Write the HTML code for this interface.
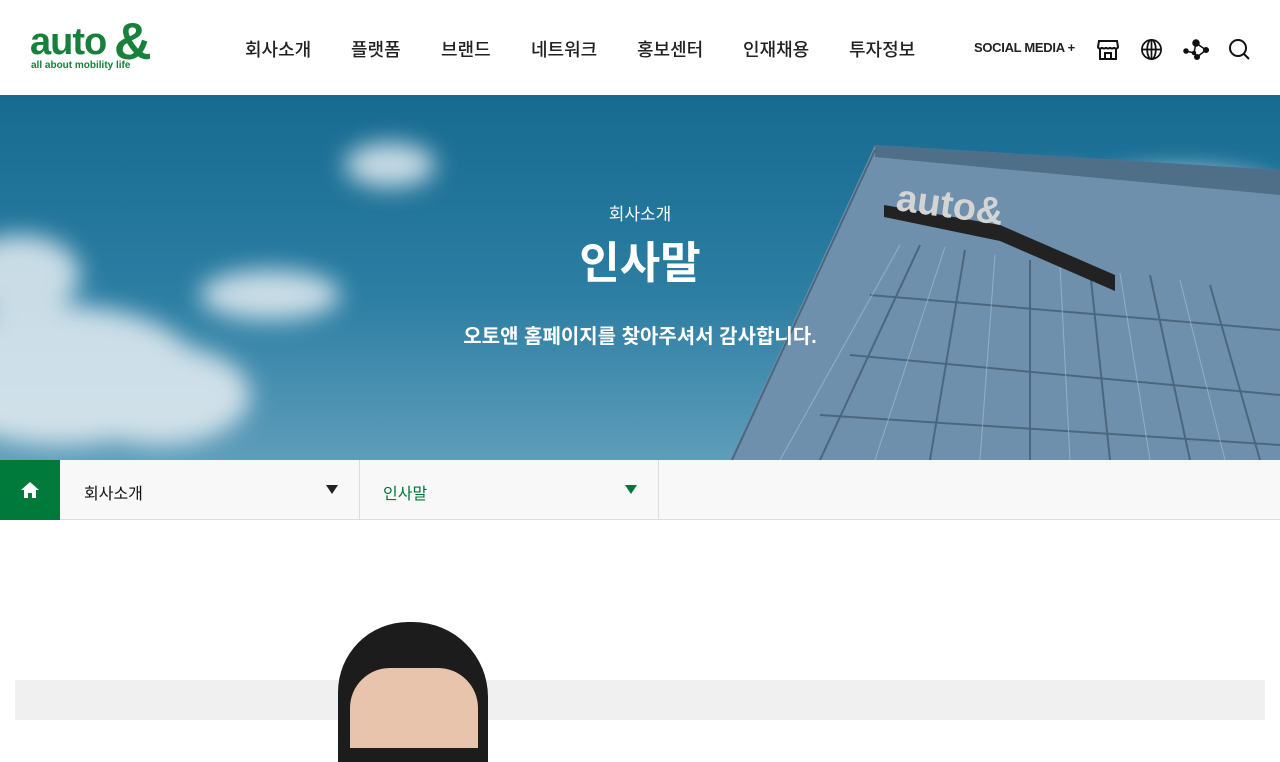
<!DOCTYPE html>
<html><head><meta charset="utf-8"><style>
*{margin:0;padding:0;box-sizing:border-box}
body{width:1280px;height:720px;overflow:hidden;background:#fff;font-family:"Liberation Sans","Noto Sans CJK KR",sans-serif;position:relative}
.hdr{position:absolute;left:0;top:0;width:1280px;height:95px;background:#fff}
.nav{position:absolute;top:36px;font-size:18px;color:#222;font-weight:500}
.sm{position:absolute;left:974px;top:40px;font-size:13px;font-weight:bold;color:#222;letter-spacing:-0.3px}
.hero{position:absolute;left:0;top:95px;width:1280px;height:365px;overflow:hidden;background:linear-gradient(180deg,#176a90 0%,#2c7ea3 55%,#5f9dba 100%)}
.bc{position:absolute;top:460px;left:0;width:1280px;height:60px;background:#f8f8f8;border-bottom:1px solid #ddd}
</style></head><body>
<div class="hdr">
<div style="position:absolute;left:30px;top:22px;font-size:38px;font-weight:bold;color:#17803a;letter-spacing:-1px;line-height:40px">auto</div>
<div style="position:absolute;left:114px;top:14px;font-size:52px;font-weight:bold;color:#17803a;line-height:56px">&amp;</div>
<div style="position:absolute;left:31px;top:60px;font-size:10px;font-weight:bold;color:#17803a">all about mobility life</div>
<div class="nav" style="left:245px">회사소개</div>
<div class="nav" style="left:351px">플랫폼</div>
<div class="nav" style="left:441px">브랜드</div>
<div class="nav" style="left:531px">네트워크</div>
<div class="nav" style="left:637px">홍보센터</div>
<div class="nav" style="left:743px">인재채용</div>
<div class="nav" style="left:849px">투자정보</div>
<div class="sm">SOCIAL MEDIA +</div>
<svg style="position:absolute;left:1096px;top:38px" width="24" height="24" viewBox="0 0 24 24" fill="none" stroke="#111" stroke-width="2"><path d="M3 3h18l1 6c0 2-4 2-4 0 0 2-4 2-4 0 0 2-4 2-4 0 0 2-4 2-4 0 0 2-4 2-4 0z"/><path d="M4 11v10h16V11M9 21v-6h6v6"/></svg>
<svg style="position:absolute;left:1140px;top:38px" width="23" height="23" viewBox="0 0 24 24" fill="none" stroke="#111" stroke-width="1.8"><circle cx="12" cy="12" r="10"/><ellipse cx="12" cy="12" rx="4.5" ry="10"/><path d="M2 12h20M12 2v20"/></svg>
<svg style="position:absolute;left:1183px;top:37px" width="26" height="26" viewBox="0 0 26 26" fill="#111" stroke="#111" stroke-width="1.5"><path d="M13 6l-2 10L3 14M11 16l3 4M13 6l10 7-9 7" fill="none"/><circle cx="13" cy="6" r="3"/><circle cx="3" cy="14" r="2"/><circle cx="23" cy="13" r="2.3"/><circle cx="14" cy="20" r="2.3"/><circle cx="11" cy="16" r="1.5"/></svg>
<svg style="position:absolute;left:1228px;top:38px" width="24" height="24" viewBox="0 0 24 24" fill="none" stroke="#111" stroke-width="2"><circle cx="10" cy="10" r="8"/><path d="M16 16l5 5"/></svg>
</div>
<div class="hero">
<svg width="1280" height="365" style="position:absolute;left:0;top:0">
<defs><filter id="b"><feGaussianBlur stdDeviation="12"/></filter></defs>
<g fill="#e6eef3" opacity=".85" filter="url(#b)">
<ellipse cx="60" cy="280" rx="140" ry="70"/><ellipse cx="160" cy="300" rx="90" ry="50"/><ellipse cx="20" cy="180" rx="60" ry="40"/>
<ellipse cx="270" cy="200" rx="70" ry="25"/><ellipse cx="390" cy="70" rx="45" ry="22"/><ellipse cx="1180" cy="110" rx="110" ry="35"/><ellipse cx="1060" cy="100" rx="40" ry="20"/>
</g>
<polygon points="875,50 1280,75 1280,365 730,365" fill="#6e90ad"/>
<polygon points="875,50 1280,75 1280,100 875,62" fill="#4f6e88"/>
<g stroke="#3f5a70" stroke-width="2" opacity=".75">
<line x1="875" y1="55" x2="732" y2="365"/><line x1="920" y1="150" x2="820" y2="365"/><line x1="965" y1="155" x2="930" y2="365"/><line x1="1030" y1="165" x2="1030" y2="365"/><line x1="1090" y1="175" x2="1110" y2="365"/><line x1="1150" y1="180" x2="1190" y2="365"/><line x1="1210" y1="190" x2="1260" y2="365"/>
<line x1="870" y1="200" x2="1280" y2="235"/><line x1="850" y1="260" x2="1280" y2="300"/><line x1="820" y1="320" x2="1280" y2="350"/>
</g>
<g stroke="#b9cede" stroke-width="1" opacity=".5">
<line x1="900" y1="150" x2="780" y2="365"/><line x1="945" y1="152" x2="875" y2="365"/><line x1="995" y1="160" x2="980" y2="365"/><line x1="1060" y1="170" x2="1070" y2="365"/><line x1="1120" y1="178" x2="1150" y2="365"/><line x1="1180" y1="185" x2="1225" y2="365"/>
</g>
<polygon points="884,110 1000,130 1115,180 1115,196 1000,146 884,122" fill="#222"/>
<text x="895" y="115" font-size="38" font-weight="bold" fill="#d4d4d4" font-family="Liberation Sans" transform="rotate(8 895 115)">auto&amp;</text>
</svg>
<div style="position:absolute;width:1280px;text-align:center;top:105px;color:#fff;font-size:17px">회사소개</div>
<div style="position:absolute;width:1280px;text-align:center;top:132px;color:#fff;font-size:44px;font-weight:bold">인사말</div>
<div style="position:absolute;width:1280px;text-align:center;top:225px;color:#fff;font-size:20px;font-weight:bold">오토앤 홈페이지를 찾아주셔서 감사합니다.</div>
</div>
<div class="bc">
<div style="position:absolute;left:0;top:0;width:60px;height:60px;background:#007a3a"><svg style="position:absolute;left:21px;top:22px" width="18" height="16" viewBox="0 0 18 16" fill="#fff"><path d="M9 0L0 8h3v8h4v-5h4v5h4V8h3z"/></svg></div>
<div style="position:absolute;left:60px;top:0;width:300px;height:60px;border-right:1px solid #ddd"><span style="position:absolute;left:24px;top:20px;font-size:16px;color:#111">회사소개</span><span style="position:absolute;left:266px;top:25px;width:0;height:0;border-left:6px solid transparent;border-right:6px solid transparent;border-top:9px solid #222"></span></div>
<div style="position:absolute;left:360px;top:0;width:299px;height:60px;border-right:1px solid #ddd"><span style="position:absolute;left:23px;top:20px;font-size:16px;color:#00753a">인사말</span><span style="position:absolute;left:265px;top:25px;width:0;height:0;border-left:6px solid transparent;border-right:6px solid transparent;border-top:9px solid #00753a"></span></div>
</div>
<div style="position:absolute;left:15px;top:680px;width:1250px;height:40px;background:#f0f0f0"></div>
<div style="position:absolute;left:338px;top:622px;width:150px;height:140px;border-radius:70px 75px 0 0;background:#1c1c1c"></div>
<div style="position:absolute;left:350px;top:668px;width:128px;height:80px;border-radius:40px 40px 0 0;background:#e9c4ac"></div>
</body></html>
